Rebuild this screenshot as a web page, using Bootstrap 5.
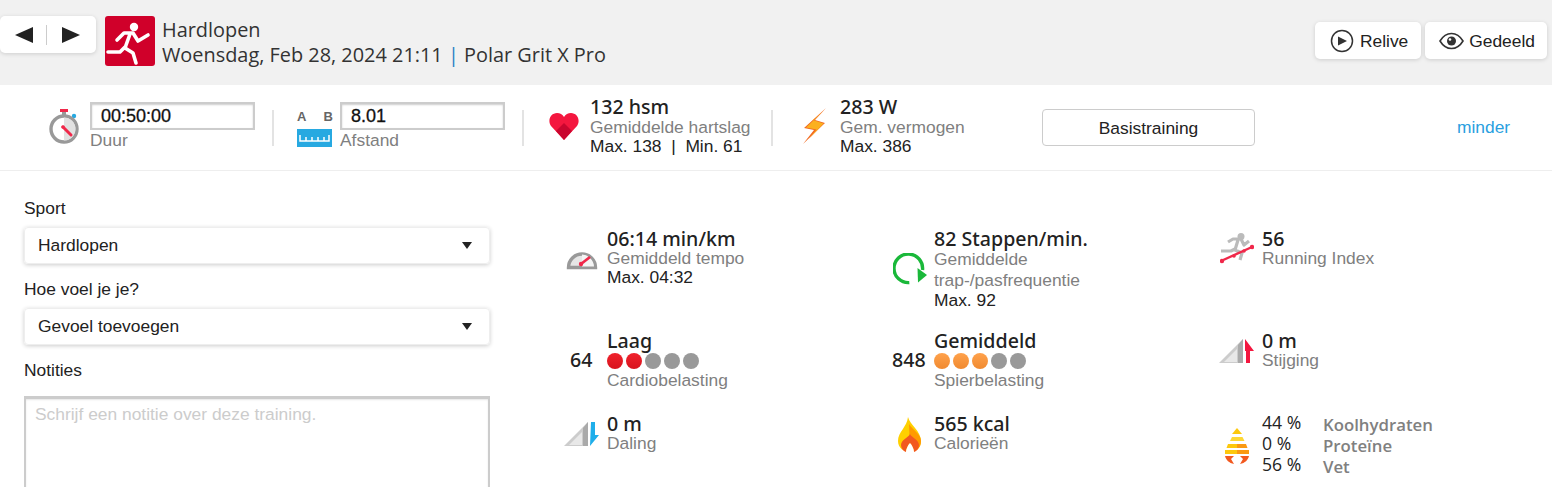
<!DOCTYPE html>
<html lang="nl">
<head>
    <meta charset="UTF-8">
    <meta name="viewport" content="width=device-width, initial-scale=1.0">
    <title>Hardlopen</title>
    <link href="https://cdn.jsdelivr.net/npm/bootstrap@5.3.0/dist/css/bootstrap.min.css" rel="stylesheet">
    <style>
        html, body { height: 487px; overflow: hidden; }
        body { background: #fff; color: #222; font-family: "Liberation Sans", Arial, sans-serif; font-size: 17.4px; line-height: 20px; }
        .top-bar { height: 85px; background: #f1f1f1; padding: 16px 5px 0 0; }
        .white-btn { background: #fff; border-radius: 5px; box-shadow: 0 1px 4px rgba(0,0,0,.15); height: 37px; }
        .prev-next { width: 96px; padding: 0 0 0 15px; }
        .prev-next i { display: block; width: 0; height: 0; border-top: 8px solid transparent; border-bottom: 8px solid transparent; }
        .tri-l { border-right: 18px solid #222; }
        .tri-r { border-left: 18px solid #222; }
        .nav-sep { width: 1px; height: 20px; background: #ccc; margin: 0 15px 0 13px; }
        .sport-logo { width: 50px; height: 50px; background: #d0002a; border-radius: 3px; margin-left: 9px; }
        .title-txt { font-family: "Open Sans", sans-serif; font-size: 19.9px; line-height: 25px; margin-left: 7px; margin-top: 1px; color: #333; }
        .title-txt span { color: #1f7fc4; }
        .top-btn { margin-top: 6px; gap: 6px; padding: 0 13px 0 15px; }
        .top-btn-eye { gap: 5px; padding: 0 12px 0 14px; }
        .stat-bar { height: 86px; border-bottom: 1px solid #eee; position: relative; }
        .stat-inner { padding: 17px 0 0 49px; }
        .stat-input { width: 165px; height: 28px; border: 2px solid #ccc; box-shadow: inset 0 1px 2px rgba(0,0,0,.2); font-size: 18px; line-height: 25px; padding: 0 9px; color: #111; -webkit-text-stroke: .3px #111; }
        .grey-txt { color: #808080; }
        .big-val { font-family: "Noto Sans", sans-serif; font-size: 19.6px; line-height: 20px; color: #222; font-weight: 500; }
        .stat-sep { width: 2px; height: 36px; background: #e3e3e3; }
        .line-h { line-height: 19px; }
        .basis-btn { width: 213px; height: 37px; border: 1px solid #ccc; border-radius: 4px; color: #222; background: #fff; }
        .less-link { color: #2a9fe0; text-decoration: none; position: absolute; left: 1457px; top: 32px; }
        .main-part { padding: 0 24px; }
        .left-col { width: 466px; padding-top: 27px; flex: none; }
        .lbl { line-height: 20px; margin-bottom: 9px; color: #222; }
        .fake-select { height: 37px; border-radius: 4px; border: 1px solid #eee; box-shadow: 0 1px 4px rgba(0,0,0,.2); padding: 0 17px 0 13px; margin-bottom: 15px; }
        .fake-select span { margin-bottom: 2px; }
        .fake-select i { width: 0; height: 0; border-left: 5px solid transparent; border-right: 5px solid transparent; border-top: 7px solid #222; }
        .note-area { width: 466px; height: 180px; border: 2px solid #ccc; border-top-width: 3px; color: #ccc; padding: 5px 9px; margin-top: 16px; box-shadow: inset 0 1px 2px rgba(0,0,0,.1); }
        .metric-grid { display: grid; grid-template-columns: 327px 328px 300px; grid-template-rows: 102px 83px 80px; margin: 58px 0 0 75px; }
        .metric-icon { width: 42px; flex: none; }
        .num-lbl { font-family: "Noto Sans", sans-serif; font-weight: 500; font-size: 19.6px; width: 42px; flex: none; padding-top: 19px; color: #222; }
        .num-short { padding-left: 5px; }
        .dots { display: flex; gap: 3px; height: 16px; margin: 2px 0 2px; }
        .dots i { width: 16px; height: 16px; border-radius: 50%; background: #999; }
        .dots .d-red { background: linear-gradient(#f0222c, #d8141e); }
        .dots .d-or { background: linear-gradient(#ffa24c, #f08a30); }
        .macro-wrap { margin-top: -2px; }
        .macro-val { font-family: "Open Sans", sans-serif; font-size: 17.6px; width: 61px; line-height: 21px; color: #222; }
        .macro-name { font-family: "Open Sans", sans-serif; font-size: 16.8px; font-weight: 600; color: #808080; line-height: 21px; padding-top: 2px; }
        .ic-gauge { margin-top: 18px; }
        .ic-cycle { margin: 24px 0 0 1px; }
        .ic-index { margin-top: 4px; }
        .ic-slope { margin: 8px 0 0 -1px; }
        .ic-flame { margin: 3px 0 0 6px; }
        .ic-drop { margin: 16px 0 0 5px; }
    </style>
</head>
<body>
    <div class="top-bar d-flex">
        <div class="white-btn prev-next d-flex align-items-center">
            <i class="tri-l"></i><span class="nav-sep"></span><i class="tri-r"></i>
        </div>
        <div class="sport-logo">
            <svg class="d-block" width="50" height="50" viewBox="0 0 50 50"><circle cx="29" cy="11" r="4.200" fill="#fff"/><path d="M12 24l7-7h9l5 8 10-6M25 18l-5 14 8 5 3 10M20 31l-5 5H3" fill="none" stroke="#fff" stroke-width="3.600" stroke-linecap="round" stroke-linejoin="round"/></svg>
        </div>
        <div class="title-txt">Hardlopen<br>Woensdag, Feb 28, 2024 21:11 <span>|</span> Polar Grit X Pro</div>
        <div class="ms-auto d-flex gap-1">
            <div class="white-btn top-btn d-flex align-items-center">
                <svg width="24" height="24" viewBox="0 0 24 24"><circle cx="12" cy="12" r="10.500" fill="none" stroke="#333" stroke-width="1.500"/><path d="M8 7.500l9 4.500-9 4.500z" fill="#333"/></svg>Relive
            </div>
            <div class="white-btn top-btn top-btn-eye d-flex align-items-center">
                <svg width="25" height="18" viewBox="0 0 25 18"><path d="M1 9c3-5 7-7.500 11.500-7.500S21 4 24 9c-3 5-7 7.500-11.500 7.500S4 14 1 9z" fill="none" stroke="#333" stroke-width="1.600"/><circle cx="12.500" cy="9" r="4.500" fill="#333"/><circle cx="11" cy="7.500" r="1.300" fill="#fff"/></svg>Gedeeld
            </div>
        </div>
    </div>

    <div class="stat-bar">
        <div class="stat-inner d-flex align-items-start">
            <svg class="mt-1" width="31" height="42" viewBox="0 0 31 42"><rect x="11" y="3" width="8" height="3" fill="#f0284a"/><rect x="13" y="6" width="4" height="4" fill="#999"/><circle cx="25" cy="10" r="2.200" fill="#27a9e1"/><circle cx="15" cy="23" r="13" fill="#fff" stroke="#999" stroke-width="3.400"/><path d="M15 11.500a11.500 11.500 0 0 1 0 23z" fill="#e1e1e1"/><circle cx="14" cy="21" r="1.800" fill="#f0284a"/><path d="M14 21l8 8" stroke="#f0284a" stroke-width="3" stroke-linecap="round"/></svg>
            <div style="margin-left:10px">
                <div class="stat-input">00:50:00</div>
                <div class="grey-txt">Duur</div>
            </div>
            <div class="stat-sep" style="margin:8px 23px 0 17px"></div>
            <div style="width:36px;margin-top:5px">
                <div class="d-flex justify-content-between fw-bold" style="font-size:13px;line-height:20px;color:#666"><span>A</span><span>B</span></div>
                <svg class="d-block" style="margin-top:2px" width="35" height="18" viewBox="0 0 35 18"><rect width="35" height="18" fill="#27a9e1"/><path d="M3 6v6h29V6M9 8v4M15 8v4M21 8v4M27 8v4" fill="none" stroke="#fff" stroke-width="1.500"/></svg>
            </div>
            <div style="margin-left:7px">
                <div class="stat-input">8.01</div>
                <div class="grey-txt">Afstand</div>
            </div>
            <div class="stat-sep" style="margin:8px 25px 0 17px"></div>
            <svg style="margin-top:10px" width="30" height="28" viewBox="0 0 30 28"><path d="M15 28L2 14C-2 8 2 1 8 1c3 0 5.500 1.500 7 4 1.500-2.500 4-4 7-4 6 0 10 7 6 13z" fill="#f4173f"/><path d="M15 28L7 19l8-8 8 8z" fill="#c9062f"/></svg>
            <div class="line-h" style="margin-left:11px;margin-top:-6px;width:173px">
                <div class="big-val" style="line-height:22px">132 hsm</div>
                <div class="grey-txt">Gemiddelde hartslag</div>
                <div>Max. 138 &nbsp;|&nbsp; Min. 61</div>
            </div>
            <div class="stat-sep" style="margin:8px 30px 0 8px"></div>
            <svg style="margin-top:6px" width="24" height="36" viewBox="0 0 24 36"><path d="M23 0L1 20l10 2L0 36l22-21-10-3z" fill="#f26a21"/><path d="M20.500 3L3 19.500l10.500 2L6 31l14.500-15.500L10 12z" fill="#fbb01f"/></svg>
            <div class="line-h" style="margin-left:13px;margin-top:-6px;width:202px">
                <div class="big-val" style="line-height:22px">283 W</div>
                <div class="grey-txt">Gem. vermogen</div>
                <div>Max. 386</div>
            </div>
            <button class="basis-btn" style="margin-top:7px">Basistraining</button>
        </div>
        <a class="less-link" href="#">minder</a>
    </div>

    <div class="main-part d-flex">
        <div class="left-col">
            <div class="lbl">Sport</div>
            <div class="fake-select d-flex align-items-center justify-content-between"><span>Hardlopen</span><i></i></div>
            <div class="lbl">Hoe voel je je?</div>
            <div class="fake-select d-flex align-items-center justify-content-between"><span>Gevoel toevoegen</span><i></i></div>
            <div class="lbl mb-0">Notities</div>
            <div class="note-area">Schrijf een notitie over deze training.</div>
        </div>
        <div class="metric-grid">
            <div class="d-flex">
                <div class="metric-icon"><svg class="ic-gauge" width="34" height="23" viewBox="0 0 34 23"><path d="M3.500 20.500a13.500 13.500 0 0 1 27 0z" fill="#e6e6e6" stroke="#999" stroke-width="3.400"/><path d="M17 7.500a13 13 0 0 1 12 12H17z" fill="#f4f4f4"/><circle cx="16" cy="17" r="2.200" fill="#f0284a"/><path d="M16 17l9-7" stroke="#f0284a" stroke-width="2.800"/></svg></div>
                <div class="line-h"><div class="big-val">06:14 min/km</div><div class="grey-txt">Gemiddeld tempo</div><div>Max. 04:32</div></div>
            </div>
            <div class="d-flex">
                <div class="metric-icon"><svg class="ic-cycle" width="35" height="33" viewBox="0 0 35 33"><path d="M16.300 29.600A14.300 14.300 0 1 1 29.500 17" fill="none" stroke="#1ab83a" stroke-width="3.400"/><path d="M24.500 15l9.500 7-9 7.500z" fill="#1ab83a"/></svg></div>
                <div class="line-h"><div class="big-val">82 Stappen/min.</div><div class="grey-txt" style="line-height:21px">Gemiddelde<br>trap-/pasfrequentie</div><div>Max. 92</div></div>
            </div>
            <div class="d-flex">
                <div class="metric-icon"><svg class="ic-index" width="34" height="32" viewBox="0 0 34 32"><circle cx="21" cy="3.500" r="3.500" fill="#bbb"/><path d="M8 9l5-3h8l3 6 5-4M18 7l-3 10 7 3-2 7M15 16l-4 2H1" fill="none" stroke="#bbb" stroke-width="3.200" stroke-linejoin="round"/><path d="M1 28l31-14" stroke="#f0284a" stroke-width="2.400"/><circle cx="2" cy="28" r="2.200" fill="#f0284a"/><circle cx="14" cy="23" r="1.800" fill="#f0284a"/><circle cx="24" cy="18" r="1.800" fill="#f0284a"/><circle cx="32" cy="14" r="2.200" fill="#f0284a"/></svg></div>
                <div class="line-h"><div class="big-val">56</div><div class="grey-txt">Running Index</div></div>
            </div>

            <div class="d-flex">
                <div class="num-lbl num-short">64</div>
                <div class="line-h"><div class="big-val">Laag</div><div class="dots"><i class="d-red"></i><i class="d-red"></i><i></i><i></i><i></i></div><div class="grey-txt">Cardiobelasting</div></div>
            </div>
            <div class="d-flex">
                <div class="num-lbl">848</div>
                <div class="line-h"><div class="big-val">Gemiddeld</div><div class="dots"><i class="d-or"></i><i class="d-or"></i><i class="d-or"></i><i></i><i></i></div><div class="grey-txt">Spierbelasting</div></div>
            </div>
            <div class="d-flex">
                <div class="metric-icon"><svg class="ic-slope" width="35" height="24" viewBox="0 0 35 24"><path d="M0 24L24 0v24z" fill="#ccc"/><path d="M5 23L18 10v13z" fill="#e8e8e8"/><path d="M19 24V6l5-6v24z" fill="#aaa"/><path d="M26 0l9 12h-4v12h-4V12h-1z" fill="#f4173f"/></svg></div>
                <div class="line-h"><div class="big-val">0 m</div><div class="grey-txt">Stijging</div></div>
            </div>

            <div class="d-flex">
                <div class="metric-icon"><svg class="ic-slope" width="35" height="24" viewBox="0 0 35 24"><path d="M0 24L24 0v24z" fill="#ccc"/><path d="M5 23L18 10v13z" fill="#e8e8e8"/><path d="M19 24V6l5-6v24z" fill="#aaa"/><path d="M27 0h4v13h4l-9 11z" fill="#1faeea"/></svg></div>
                <div class="line-h"><div class="big-val">0 m</div><div class="grey-txt">Daling</div></div>
            </div>
            <div class="d-flex">
                <div class="metric-icon"><svg class="ic-flame" width="24" height="36" viewBox="0 0 24 36"><path d="M10 0c2 8 13 14 13 24 0 7-5 11-11 11S0 31 0 24C0 15 9 10 10 0z" fill="#ffd000"/><path d="M11 7c4 6 12 10 12 17 0 7-5 11-11 11z" fill="#ff9a00"/><path d="M12 17c-1 3-9 6-9 11 0 3 2 6 5 7 0-3 2-7 4-9 2 2 4 6 4 9 3-1 5-4 5-7 0-5-8-8-9-11z" fill="#f2591f"/><path d="M12 26c-2 2-4 6-4 9h8c0-3-2-7-4-9z" fill="#fff"/></svg></div>
                <div class="line-h"><div class="big-val">565 kcal</div><div class="grey-txt">Calorieën</div></div>
            </div>
            <div class="d-flex macro-wrap">
                <div class="metric-icon"><svg class="ic-drop" width="24" height="36" viewBox="0 0 24 36"><path d="M12 0l5 6H7z" fill="#fdc80d"/><path d="M7 9h10.500l2 4H5z" fill="#fdd835"/><path d="M3 16h9v4H1.500z" fill="#fdc80d"/><path d="M12 16h9l1.500 4H12z" fill="#fb9a12"/><path d="M0 22h12v4H0z" fill="#fdc80d"/><path d="M12 22h12v4H12z" fill="#fb9a12"/><path d="M0 28h9l-3 3 3 5c-5-1-8-4-9-8z" fill="#f2591f"/><path d="M24 28h-9l3 3-3 5c5-1 8-4 9-8z" fill="#f2591f"/></svg></div>
                <div class="macro-val">44 %<br>0 %<br>56 %</div>
                <div class="macro-name">Koolhydraten<br>Proteïne<br>Vet</div>
            </div>
        </div>
    </div>
    <script src="https://cdn.jsdelivr.net/npm/bootstrap@5.3.0/dist/js/bootstrap.bundle.min.js"></script>
</body>
</html>
